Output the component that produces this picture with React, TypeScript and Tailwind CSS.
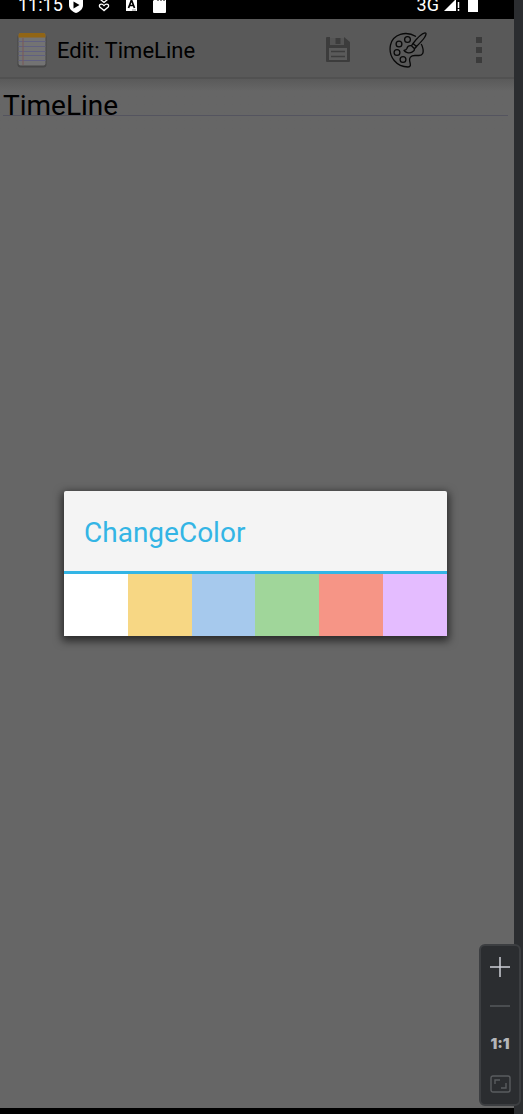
import React from "react";

const swatches = [
  { name: "White", className: "bg-white" },
  { name: "Yellow", className: "bg-[#f7d784]" },
  { name: "Blue", className: "bg-[#a6c9ed]" },
  { name: "Green", className: "bg-[#a0d69a]" },
  { name: "Red", className: "bg-[#f69586]" },
  { name: "Purple", className: "bg-[#e4bcff]" },
];

function StatusBar() {
  return (
    <div className="h-[19px] shrink-0 overflow-hidden bg-black text-white">
      <div className="flex h-[10px] items-center justify-between pr-9 pl-[18px] text-[18px] leading-[10px]">
        <div className="flex items-center">
          <span>11:15</span>
          <svg className="ml-[6px] shrink-0" width="14" height="16" viewBox="0 0 14 16">
            <path d="M7 0 14 3v5c0 4-3 6.500-7 8-4-1.500-7-4-7-8V3z" fill="#fff" />
            <path d="M4.500 4.500 10.500 8l-6 3.500z" fill="#000" />
          </svg>
          <svg className="ml-[15px] shrink-0" width="12" height="14" viewBox="0 0 12 14" fill="none" stroke="#fff" strokeWidth="1.300">
            <path d="M6 12.600 1.800 9C.2 6.800 3.500 4.800 6 7.600 8.500 4.800 11.800 6.800 10.200 9z" />
            <path d="m2.500 1.500 3.500 3 3.500-3" />
          </svg>
          <svg className="ml-[16px] shrink-0" width="11" height="14" viewBox="0 0 11 14">
            <path d="M0 0h11v13H0z" fill="#fff" />
            <path d="M2.500 10 5.500 2l3 8M3.500 7.500h4" fill="none" stroke="#000" strokeWidth="1.700" />
            <path d="M6 12h4" stroke="#888" />
          </svg>
          <svg className="ml-[16px] shrink-0" width="13" height="16" viewBox="0 0 13 16">
            <path d="M4 0h8q1 0 1 1v14q0 1-1 1H1q-1 0-1-1V4z" fill="#fff" />
            <path d="M5 1v3M8 1v3M11 1v3" stroke="#000" />
          </svg>
        </div>
        <div className="flex items-center">
          <span>3G</span>
          <svg className="ml-[5px] shrink-0" width="16" height="14" viewBox="0 0 16 14">
            <path d="M0 13 12 1v12z" fill="#fff" />
            <path d="M14.500 4v6M14.500 11v2" stroke="#fff" strokeWidth="1.500" />
          </svg>
          <svg className="ml-[8px] shrink-0" width="10" height="16" viewBox="0 0 10 16">
            <path d="M3 0h4v2h3v13H0V2h3z" fill="#fff" />
          </svg>
        </div>
      </div>
    </div>
  );
}

function NoteIcon() {
  return (
    <svg className="shrink-0" width="30" height="36" viewBox="0 0 30 36">
      <rect x="0.500" y="2" width="29" height="33.500" rx="3" fill="#474747" />
      <rect x="1.500" y="1" width="27" height="32.500" rx="2" fill="#737373" />
      <path d="M1.500 5.500V3q0-2 2-2h23q2 0 2 2v2.500z" fill="#916515" />
      <path d="M1.500 9.500h27M1.500 14.500h27M1.500 19.500h27M1.500 23.500h27M1.500 28.500h27" stroke="#606080" />
      <path d="M6 6v27" stroke="#7a5858" />
    </svg>
  );
}

function SaveIcon() {
  return (
    <svg width="24" height="25" viewBox="0 0 24 25">
      <path d="M0 1q0-1 1-1h3v8h14V0l6 5v19q0 1-1 1H1q-1 0-1-1z" fill="#3c3c3c" />
      <path d="M4 1h14v7H4z" fill="#545454" />
      <path d="M9.500 1h5v6h-5z" fill="#3c3c3c" />
      <path d="M3 11h18v12H3z" fill="#5a5a5a" />
      <path d="M5 14.500h14M5 19.500h14" stroke="#3c3c3c" strokeWidth="1.400" />
    </svg>
  );
}

function PaletteIcon() {
  return (
    <svg width="38" height="36" viewBox="0 0 38 36" fill="none" stroke="#090909" strokeWidth="1.300" strokeLinejoin="round">
      <path d="M27 4.500C17-1.500 4 2 1.500 13-1 25 8 35 19 35c3 0 2.500-2.500 2-4.500-1.500-5 1-7 5-7h4c4 0 4.500-3 4-6.500-.3-2-.8-3.500-1.800-5" />
      <circle cx="10" cy="12" r="2.900" />
      <circle cx="18.500" cy="7.500" r="2.900" />
      <circle cx="8" cy="20.500" r="2.900" />
      <circle cx="14" cy="27.500" r="2.900" />
      <path d="M24 11.500C27 7.500 32.500 1.500 36 .8c2 0 .6 3-.5 4.700-2 3-5 6-8 9z" />
      <path d="m24 11.500-1.500 2.200 3 3 2-2.200M22.500 13.700c-3-.5-4 .8-4.500 2.500-.5 1.500-1.500 2-3 2.200 1 2 5 3.200 8 1.800 1.800-.8 2.700-2 2.500-3.500" />
    </svg>
  );
}

function ZoomControls() {
  const button = "flex h-[39px] w-full items-center justify-center";
  return (
    <div className="absolute right-[2px] bottom-[8px] flex w-[42px] flex-col rounded-[6px] border-2 border-[#3c3e41] bg-[#2b2d30] pt-[1px] pb-[1px]">
      <button className={button} aria-label="Zoom in">
        <svg width="20" height="20" viewBox="0 0 20 20" stroke="#ced0d6" strokeWidth="1.500">
          <path d="M10 0v20M0 10h20" />
        </svg>
      </button>
      <button className={button} aria-label="Zoom out">
        <svg width="20" height="2" viewBox="0 0 20 2">
          <path d="M0 1h20" stroke="#56585b" strokeWidth="1.500" />
        </svg>
      </button>
      <button className={`${button} font-['Inter',sans-serif] text-[15px] font-black text-[#b4b6b9]`}>
        1:1
      </button>
      <button className={button} aria-label="Fit to window">
        <svg width="21" height="18" viewBox="0 0 21 18" fill="none" stroke="#5a5c5f" strokeWidth="1.400">
          <rect x="1" y="1" width="19" height="16" rx="2" />
          <path d="M5 9V5h5M16 8v5h-5" />
        </svg>
      </button>
    </div>
  );
}

export default function App() {
  return (
    <div className="relative flex min-h-screen bg-[#2b2d30] pr-[9px] font-['Roboto',sans-serif]">
      <div className="flex min-w-0 flex-1 flex-col border-b-[6px] border-black bg-[#666]">
        <StatusBar />
        <main className="relative flex flex-1 flex-col">
          <header className="flex h-[60px] shrink-0 items-center border-b-2 border-[#515151] bg-[#595959] pt-[3px] pr-8 pl-[17px] text-black">
            <NoteIcon />
            <h1 className="ml-[10px] flex-1 pt-[2px] text-[22px] leading-7 whitespace-nowrap">Edit: TimeLine</h1>
            <button aria-label="Save"><SaveIcon /></button>
            <button className="ml-[39px]" aria-label="Change color"><PaletteIcon /></button>
            <button className="ml-[49px] flex flex-col gap-[4px]" aria-label="More options">
              <span className="size-[6px] bg-[#3b3b3b]" />
              <span className="size-[6px] bg-[#3b3b3b]" />
              <span className="size-[6px] bg-[#3b3b3b]" />
            </button>
          </header>
          <div className="bg-linear-to-b from-[#5a5a5a] to-[#666] to-[12px] pr-[6px] pl-[3px]">
            <input
              aria-label="Note title"
              defaultValue="TimeLine"
              className="block h-[52px] w-full bg-[linear-gradient(#54545f,#54545f)] bg-[length:100%_1px] bg-[position:0_36px] bg-no-repeat text-[28px] text-black outline-none"
            />
          </div>
          <div className="absolute inset-0 flex items-center pr-[67px] pl-[64px]">
            <section role="dialog" aria-labelledby="dialog-title" className="w-full overflow-hidden rounded-t-[2px] shadow-[0_3px_9px_2px_rgba(0,0,0,0.6)]">
              <h2 id="dialog-title" className="flex h-[83px] items-center border-b-3 border-[#33b5e5] bg-[#f4f4f4] px-5 pt-1 text-[28px] text-[#33b5e5]">
                ChangeColor
              </h2>
              <div className="grid h-[62px] grid-cols-6">
                {swatches.map((s) => (
                  <button key={s.name} aria-label={s.name} className={s.className} />
                ))}
              </div>
            </section>
          </div>
        </main>
      </div>
      <ZoomControls />
    </div>
  );
}
